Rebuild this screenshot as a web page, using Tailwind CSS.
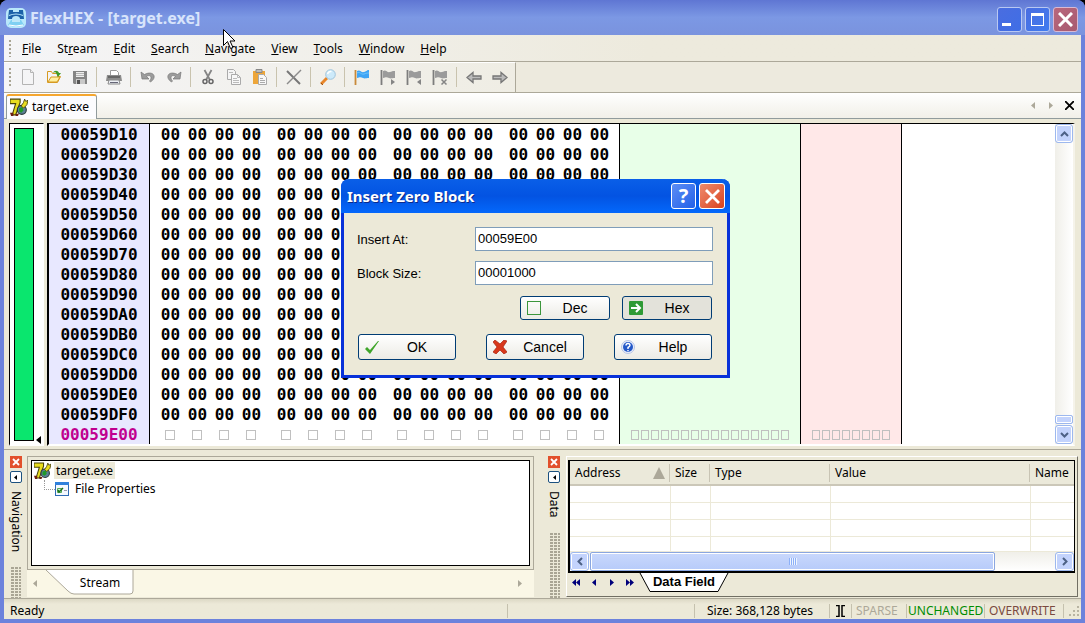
<!DOCTYPE html>
<html lang="en">
<head>
<meta charset="utf-8">
<title>FlexHEX - [target.exe]</title>
<script src="https://cdn.jsdelivr.net/npm/@tailwindcss/browser@4"></script>
</head>
<body class="bg-black">
<svg class="hidden">
  <defs>
    <linearGradient id="page" x1="0" y1="0" x2="1" y2="1"><stop offset="0" stop-color="#fff"/><stop offset="1" stop-color="#d4d4d4"/></linearGradient>
    <linearGradient id="fold" x1="0" y1="0" x2="0" y2="1"><stop offset="0" stop-color="#ffe98a"/><stop offset="1" stop-color="#f6b93a"/></linearGradient>
    <symbol id="exe" viewBox="0 0 16 16">
      <path d="M0 1h9v3L5 15H2L5 5H0z" fill="#e8dc1e" stroke="#4a4508" stroke-width="1"/>
      <circle cx="10.500" cy="10.500" r="4" fill="#5b7f96" stroke="#2a3a3a"/>
      <path d="M8 9l3-1 1 3-2 2-2-1z" fill="#1f9a2a"/>
      <path d="M10 7l2-3 1-3 1 2 2-1-1 4-3 3z" fill="#e8dc1e" stroke="#4a4508" stroke-width=".8"/>
      <path d="M0 13h3v3H1zM5 14h3l-1 2H5z" fill="#6b2010"/>
    </symbol>
    <symbol id="flag" viewBox="0 0 16 16">
      <path d="M1.500 1v15" stroke="#7d7d7d" stroke-width="1.800"/>
      <path d="M3 2c3-2 4 2 7 1s3-1 5-1v7c-3 0-4 1-6 0s-3-1-6 0z" fill="#9b9b9b"/>
    </symbol>
  </defs>
</svg>

<div class="flex min-h-screen flex-col rounded-t-lg bg-[#6c82dc] font-['Noto_Sans',sans-serif] text-[12px] leading-4 text-black">
  <header class="flex h-[35px] shrink-0 items-center rounded-t-lg bg-linear-to-b from-[#5f76d3] via-[#7c98e4] to-[#7a93de] pr-[7px] pl-1.5">
    <svg class="h-5 w-5" viewBox="0 0 20 20">
      <rect width="20" height="20" rx="5" fill="#b9e8fb"/>
      <path d="M3 2h4v2h6V2h4l1 9H2z" fill="#1c62a8"/>
      <path d="M3 7.500q7-3 14 0" fill="none" stroke="#b9e8fb" stroke-width="1.200"/>
      <path d="M6 11q0-3 4-3t4 3z" fill="#b9e8fb"/>
      <path d="M5 12h10l3 5q-8 3-16 0z" fill="#7fd0f2"/>
      <path d="M3 17q7 2 14 0M6 13h8" fill="none" stroke="#fff"/>
    </svg>
    <h1 class="ml-1 flex-1 text-[16px] leading-5 font-bold text-[#d8e4fb]">FlexHEX - [target.exe]</h1>
    <div class="flex gap-[3px] pt-1">
      <button aria-label="Minimize" class="flex h-[25px] w-[25px] items-end rounded-[3px] border border-[#b9c8f2] bg-linear-to-br from-[#4a6de0] to-[#3f6ee6] pb-[5px] pl-1"><span class="h-[3px] w-[9px] bg-white"></span></button>
      <button aria-label="Maximize" class="flex h-[25px] w-[25px] items-center justify-center rounded-[3px] border border-[#b9c8f2] bg-linear-to-br from-[#4a6de0] to-[#3f7cf0]"><span class="h-[13px] w-[13px] border border-t-[3px] border-white"></span></button>
      <button aria-label="Close" class="flex h-[25px] w-[25px] items-center justify-center rounded-[3px] border border-[#d9b9d2] bg-linear-to-br from-[#b8677c] to-[#a85a70]"><svg class="h-[15px] w-[15px]" viewBox="0 0 15 15"><path d="M1 1l13 13M14 1L1 14" stroke="#fff" stroke-width="3"/></svg></button>
    </div>
  </header>

  <div class="mx-1 mb-1 flex flex-1 flex-col bg-[#ece9d8]">
    <nav class="flex h-[27px] shrink-0 items-center border-b border-[#aca899] bg-linear-to-r from-[#f5f5f7] to-[#edeadd] to-60% pt-px pl-[5px]">
      <span class="mr-[11px] h-[17px] w-[2px] bg-[repeating-linear-gradient(#a9a594_0_2px,transparent_2px_4px)]"></span>
      <div class="flex gap-4">
        <a href="#"><u>F</u>ile</a><a href="#">St<u>r</u>eam</a><a href="#"><u>E</u>dit</a><a href="#"><u>S</u>earch</a><a href="#"><u>N</u>avigate</a><a href="#"><u>V</u>iew</a><a href="#"><u>T</u>ools</a><a href="#"><u>W</u>indow</a><a href="#"><u>H</u>elp</a>
      </div>
    </nav>

    <div class="flex h-[31px] shrink-0 border-b border-[#aca899] bg-[#edeade]">
      <div class="flex items-center border-t border-r border-t-white border-r-[#aca899] bg-linear-to-r from-[#f5f5f7] to-[#efede4] pr-0.5 pb-px pl-[5px]">
        <span class="mr-1 h-[19px] w-[2px] bg-[repeating-linear-gradient(#a9a594_0_2px,transparent_2px_4px)]"></span>
        <button aria-label="New" class="flex w-[26px] justify-center"><svg class="h-4 w-4" viewBox="0 0 16 16"><path d="M2.500.5h8l3 3v12h-11z" fill="url(#page)" stroke="#b4b4b4"/><path d="M10.500.5v3h3" fill="#eee" stroke="#b4b4b4"/></svg></button>
        <button aria-label="Open" class="flex w-[26px] justify-center"><svg class="h-4 w-4" viewBox="0 0 16 16"><path d="M1.500 13.500v-11h4l1 2h5v3h3l-3 6z" fill="url(#fold)" stroke="#d69a22"/><path d="M2 13l3-5h9l-3 5z" fill="#fff0a0" stroke="#d69a22"/><path d="M7 4c1-3 5-3 6 0h2l-3 4-2-4c0-1-2-1-3 0z" fill="#3f9a28"/></svg></button>
        <button aria-label="Save" class="flex w-[26px] justify-center"><svg class="h-4 w-4" viewBox="0 0 16 16"><path d="M1 2h14v13H2l-1-1z" fill="#858585"/><path d="M4 3h8v5H4z" fill="#eee"/><path d="M4 4.500h8M4 6.500h8" stroke="#b5b5b5"/><path d="M4 10h9v5H4z" fill="#c9c9c9"/><path d="M5 11h3v4H5z" fill="#555"/></svg></button>
        <span class="mr-1 ml-[3px] h-5 w-px bg-[#c9c3ae]"></span>
        <button aria-label="Print" class="flex w-[26px] justify-center"><svg class="h-4 w-4" viewBox="0 0 16 16"><path d="M4.500 6V1.500h6l2 2V6" fill="#fff" stroke="#9a9a9a"/><path d="M1 6h14l1 6H0z" fill="#8b8b8b"/><path d="M2 7h12v2H2z" fill="#666"/><path d="M3 11h10l1 4H2z" fill="#eceff5" stroke="#8b8b8b"/><path d="M4 13.500h8" stroke="#667"/></svg></button>
        <span class="mr-1 ml-[3px] h-5 w-px bg-[#c9c3ae]"></span>
        <button aria-label="Undo" class="flex w-[26px] justify-center"><svg class="h-4 w-4" viewBox="0 0 16 16"><path d="M1 3l1 7h7L6.500 7.500C10 5 13 8 9.500 12l1 1C18 8 13 1 4.500 5.500z" fill="#9c9c9c" stroke="#777" stroke-width=".7"/></svg></button>
        <button aria-label="Redo" class="flex w-[26px] justify-center"><svg class="h-4 w-4" viewBox="0 0 16 16"><path d="M15 3l-1 7H7l2.500-2.500C6 5 3 8 6.500 12l-1 1C-2 8 3 1 11.500 5.500z" fill="#9c9c9c" stroke="#777" stroke-width=".7"/></svg></button>
        <span class="mr-1 ml-[3px] h-5 w-px bg-[#c9c3ae]"></span>
        <button aria-label="Cut" class="flex w-[26px] justify-center"><svg class="h-4 w-4" viewBox="0 0 16 16" fill="none"><path d="M4.500 1L10 11M11.500 1L6 11" stroke="#858585" stroke-width="1.800"/><circle cx="5" cy="12.500" r="2" stroke="#666" stroke-width="1.500"/><circle cx="11" cy="12.500" r="2" stroke="#666" stroke-width="1.500"/></svg></button>
        <button aria-label="Copy" class="flex w-[26px] justify-center"><svg class="h-4 w-4" viewBox="0 0 16 16"><path d="M1.500.5h6l2 2v8h-8z" fill="#f5f5f5" stroke="#aaa"/><path d="M5.500 5.500h6l3 3v7h-9z" fill="#f8f8f8" stroke="#aaa"/><path d="M11.500 5.500v3h3M7 9.500h4M7 11.500h6M7 13.500h6M3 3.500h4" stroke="#bbb" fill="none"/></svg></button>
        <button aria-label="Paste" class="flex w-[26px] justify-center"><svg class="h-4 w-4" viewBox="0 0 16 16"><path d="M1 2h12v13H1z" fill="#eda63a"/><path d="M4 .5h6v3H4z" fill="#bcbcbc" stroke="#888"/><path d="M6.500 5.500h5l3 3v7h-8z" fill="#f8f8f8" stroke="#aaa"/><path d="M8 9.500h3M8 11.500h5M8 13.500h5" stroke="#aaa"/></svg></button>
        <span class="mr-1 ml-[3px] h-5 w-px bg-[#c9c3ae]"></span>
        <button aria-label="Delete" class="flex w-[26px] justify-center"><svg class="h-4 w-4" viewBox="0 0 16 16"><path d="M1 2l13 13" stroke="#777" stroke-width="2"/><path d="M15 1L1 15" stroke="#8b8b8b" stroke-width="1.500"/></svg></button>
        <span class="mr-1 ml-[3px] h-5 w-px bg-[#c9c3ae]"></span>
        <button aria-label="Find" class="flex w-[26px] justify-center"><svg class="h-4 w-4" viewBox="0 0 16 16"><path d="M7 9l-6 6" stroke="#e8862a" stroke-width="3"/><path d="M1 14l2 2" stroke="#9a5210"/><circle cx="10.500" cy="5.500" r="4.800" fill="#cdeafa" stroke="#9fc4dc"/><path d="M7.500 5q1-3 4-2.500" stroke="#fff" stroke-width="1.500" fill="none"/></svg></button>
        <span class="mr-1 ml-[3px] h-5 w-px bg-[#c9c3ae]"></span>
        <button aria-label="Toggle bookmark" class="flex w-[26px] justify-center"><svg class="h-4 w-4" viewBox="0 0 16 16"><path d="M1.500 1v15" stroke="#c98a3a" stroke-width="1.800"/><path d="M3 2c3-2 4 2 7 1s3-2 5-2v8c-3 0-4 1-6 0s-3-1-6 0z" fill="#3fa4f5"/><path d="M3 4c3-2 4 2 7 1s3-1 5-1" stroke="#6cc4fb" fill="none"/></svg></button>
        <button aria-label="Next bookmark" class="flex w-[26px] justify-center"><svg class="h-4 w-4" viewBox="0 0 16 16"><use href="#flag"/><path d="M11 10v6l4-3z" fill="#858585"/></svg></button>
        <button aria-label="Previous bookmark" class="flex w-[26px] justify-center"><svg class="h-4 w-4" viewBox="0 0 16 16"><use href="#flag"/><path d="M15 10v6l-4-3z" fill="#858585"/></svg></button>
        <button aria-label="Clear bookmarks" class="flex w-[26px] justify-center"><svg class="h-4 w-4" viewBox="0 0 16 16"><use href="#flag"/><path d="M9.500 10.500l5 5M14.500 10.500l-5 5" stroke="#858585" stroke-width="1.500"/></svg></button>
        <span class="mr-1 ml-[3px] h-5 w-px bg-[#c9c3ae]"></span>
        <button aria-label="Back" class="flex w-[26px] justify-center"><svg class="h-4 w-4" viewBox="0 0 16 16"><path d="M1 8.500l6-5v3.500h8v3H7v3.500z" fill="#bbb" stroke="#777" stroke-width="1.300"/></svg></button>
        <button aria-label="Forward" class="flex w-[26px] justify-center"><svg class="h-4 w-4" viewBox="0 0 16 16"><path d="M15 8.500l-6-5v3.500H1v3h8v3.500z" fill="#bbb" stroke="#777" stroke-width="1.300"/></svg></button>
      </div>
    </div>

    <div class="flex h-[26px] shrink-0 items-end bg-linear-to-b from-white to-[#f1efe7]">
      <span class="h-full w-0.5 border-b border-[#919b9c]"></span>
      <button class="flex h-[25px] items-center gap-1 rounded-t-[3px] border-x border-t-2 border-x-[#919b9c] border-t-[#f5a62f] bg-[#fcfcfe] pr-[7px] pb-0.5 pl-[3px]"><svg class="h-[18px] w-[18px]"><use href="#exe"/></svg>target.exe</button>
      <div class="flex h-full flex-1 items-center justify-end gap-3 border-b border-[#919b9c] pr-[7px]">
        <button aria-label="Scroll tabs left"><svg class="h-[7px] w-1" viewBox="0 0 4 7"><path d="M4 0v7L0 3.500z" fill="#aca899"/></svg></button>
        <button aria-label="Scroll tabs right" class="ml-0.5"><svg class="h-[7px] w-1" viewBox="0 0 4 7"><path d="M0 0v7l4-3.500z" fill="#aca899"/></svg></button>
        <button aria-label="Close document"><svg class="h-[9px] w-[9px]" viewBox="0 0 9 9"><path d="M0 0l9 9M9 0L0 9" stroke="#000" stroke-width="1.800"/></svg></button>
      </div>
    </div>

    <main class="flex flex-1 border-b border-[#aca899] pt-1 pr-1.5 pb-[3px] pl-[5px]">
      <div class="flex w-[35px] border border-b-2 border-t-black border-r-white border-b-white border-l-black bg-white">
        <div class="mt-1 mb-[3px] ml-1 w-5 border border-black bg-[#0ae66e]"></div>
        <svg class="mt-auto ml-0.5 h-2 w-[5px] shrink-0" viewBox="0 0 5 8"><path d="M5 0v8L0 4z"/></svg>
      </div>
      <div class="ml-[3px] flex flex-1 border-x-2 border-t border-b-2 border-t-black border-r-[#f5f3ea] border-b-white border-l-black bg-white">
        <table class="w-full table-fixed border-separate border-spacing-0 font-['DejaVu_Sans_Mono',monospace] text-[16px] leading-[18px] font-bold">
          <colgroup id="cols"></colgroup>
          <tbody id="dump"></tbody>
        </table>
        <div class="flex w-[18px] shrink-0 flex-col gap-px bg-linear-to-r from-[#f0efe9] to-white">
          <button aria-label="Scroll up" class="flex h-[19px] items-center justify-center rounded-[3px] border border-[#9db8ee] bg-[#c3d3fc] inset-ring inset-ring-white"><svg class="h-[6px] w-[9px]" viewBox="0 0 9 6"><path d="M1 5l3.500-3.500L8 5" stroke="#4d6185" stroke-width="2" fill="none"/></svg></button>
          <span class="mt-auto h-[9px] rounded-[2px] border border-[#9db8ee] bg-[#c3d3fc] inset-ring inset-ring-white"></span>
          <button aria-label="Scroll down" class="flex h-[19px] items-center justify-center rounded-[3px] border border-[#9db8ee] bg-[#c3d3fc] inset-ring inset-ring-white"><svg class="h-[6px] w-[9px]" viewBox="0 0 9 6"><path d="M1 1l3.500 3.500L8 1" stroke="#4d6185" stroke-width="2" fill="none"/></svg></button>
        </div>
      </div>
    </main>

    <div class="flex h-[148px] shrink-0 pt-1.5">
      <aside class="flex w-[23px] shrink-0 flex-col items-center gap-[3px]">
        <button aria-label="Close Navigation" class="flex h-3 w-3 shrink-0 items-center justify-center bg-[#e2502c]"><svg class="h-2 w-2" viewBox="0 0 8 8"><path d="M1 1l6 6M7 1L1 7" stroke="#fff" stroke-width="1.800"/></svg></button>
        <button aria-label="Collapse Navigation" class="flex h-3 w-3 shrink-0 items-center justify-center rounded-[2px] border border-[#1c5180] bg-white"><svg class="h-[5px] w-[3px]" viewBox="0 0 3 5"><path d="M3 0v5L0 2.500z"/></svg></button>
        <span class="mt-[5px] h-[72px] [writing-mode:vertical-rl]">Navigation</span>
        <span class="w-[11px] flex-1 bg-[linear-gradient(90deg,#ece9d8_1px,transparent_1px),linear-gradient(#ece9d8_1px,#a9a594_1px)] bg-size-[4px_3px]"></span>
      </aside>
      <section class="flex flex-1 flex-col">
        <div class="h-[114px] border border-[#aca899] p-[3px]">
          <div class="h-full border border-black bg-white pl-0.5">
            <div class="flex h-[19px] items-center gap-[3px]"><svg class="h-[17px] w-[17px]"><use href="#exe"/></svg><span class="bg-[#ece9d8] px-0.5 leading-[17px]">target.exe</span></div>
            <div class="flex h-[18px] items-center">
              <span class="ml-[10px] h-[10px] w-[11px] self-start border-b border-l border-dotted border-[#999]"></span>
              <svg class="mr-1.5 h-[14px] w-[14px]" viewBox="0 0 14 14"><rect x=".5" y=".5" width="13" height="13" fill="#f4f8ff" stroke="#2f6bb5"/><path d="M0 0h14v3H0z" fill="#2f80dc"/><path d="M2.500 6.500h4v4h-4z" fill="#dff0df" stroke="#5a5"/><path d="M3 8l1 2 4-4" stroke="#196f19" stroke-width="1.500" fill="none"/><path d="M9 8.500h3" stroke="#99a"/></svg>
              <span>File Properties</span>
            </div>
          </div>
        </div>
        <div class="flex h-[27px] items-center bg-[#faf7e6] pr-3 pl-1.5">
          <button aria-label="Previous stream"><svg class="h-[7px] w-1" viewBox="0 0 4 7"><path d="M4 0v7L0 3.500z" fill="#aca899"/></svg></button>
          <button class="relative ml-2 h-full w-[90px] self-start pb-0.5">
            <svg class="absolute top-0 left-0 h-[25px] w-[90px]" viewBox="0 0 90 25"><path d="M1 0l22 21q3 3 6 3h56q3 0 3-3V0" fill="#fff" stroke="#aca899"/></svg>
            <span class="relative pl-5">Stream</span>
          </button>
          <button aria-label="Next stream" class="ml-auto"><svg class="h-[7px] w-1" viewBox="0 0 4 7"><path d="M0 0v7l4-3.500z" fill="#aca899"/></svg></button>
        </div>
      </section>
      <aside class="ml-2 flex w-6 shrink-0 flex-col items-center gap-[3px]">
        <button aria-label="Close Data" class="flex h-3 w-3 shrink-0 items-center justify-center bg-[#e2502c]"><svg class="h-2 w-2" viewBox="0 0 8 8"><path d="M1 1l6 6M7 1L1 7" stroke="#fff" stroke-width="1.800"/></svg></button>
        <button aria-label="Collapse Data" class="flex h-3 w-3 shrink-0 items-center justify-center rounded-[2px] border border-[#1c5180] bg-white"><svg class="h-[5px] w-[3px]" viewBox="0 0 3 5"><path d="M3 0v5L0 2.500z"/></svg></button>
        <span class="mt-[5px] h-[38px] [writing-mode:vertical-rl]">Data</span>
        <span class="w-[11px] flex-1 bg-[linear-gradient(90deg,#ece9d8_1px,transparent_1px),linear-gradient(#ece9d8_1px,#a9a594_1px)] bg-size-[4px_3px]"></span>
      </aside>
      <section class="mr-[3px] mb-px flex w-[512px] shrink-0 flex-col border border-t-white border-r-[#716f64] border-b-[#716f64] border-l-white pt-[3px] pr-0.5 pl-px">
        <div class="border-2 border-t border-r border-black bg-white">
          <table class="w-full table-fixed border-collapse">
            <colgroup><col class="w-[100px]"><col class="w-10"><col class="w-[120px]"><col class="w-[200px]"><col></colgroup>
            <thead class="bg-[#ebe9da] text-left">
              <tr class="h-6 border-b-2 border-[#cbc7b8]">
                <th class="pt-px pl-[5px] font-normal"><div class="flex items-center justify-between border-r border-[#c8c4b4] pr-1 leading-[18px]">Address<svg class="h-3 w-3" viewBox="0 0 12 12"><path d="M6 0l6 12H0z" fill="#aca899"/></svg></div></th>
                <th class="pt-px pl-[5px] font-normal"><div class="border-r border-[#c8c4b4] leading-[18px]">Size</div></th>
                <th class="pt-px pl-[5px] font-normal"><div class="border-r border-[#c8c4b4] leading-[18px]">Type</div></th>
                <th class="pt-px pl-[5px] font-normal"><div class="border-r border-[#c8c4b4] leading-[18px]">Value</div></th>
                <th class="pt-px pl-[5px] font-normal">Name</th>
              </tr>
            </thead>
            <tbody>
              <tr class="h-[17px] border-b border-[#ece9d8]"><td class="border-r border-[#ece9d8]"></td><td class="border-r border-[#ece9d8]"></td><td class="border-r border-[#ece9d8]"></td><td class="border-r border-[#ece9d8]"></td><td></td></tr>
              <tr class="h-[17px] border-b border-[#ece9d8]"><td class="border-r border-[#ece9d8]"></td><td class="border-r border-[#ece9d8]"></td><td class="border-r border-[#ece9d8]"></td><td class="border-r border-[#ece9d8]"></td><td></td></tr>
              <tr class="h-[17px] border-b border-[#ece9d8]"><td class="border-r border-[#ece9d8]"></td><td class="border-r border-[#ece9d8]"></td><td class="border-r border-[#ece9d8]"></td><td class="border-r border-[#ece9d8]"></td><td></td></tr>
              <tr class="h-[15px] border-b border-[#ece9d8]"><td class="border-r border-[#ece9d8]"></td><td class="border-r border-[#ece9d8]"></td><td class="border-r border-[#ece9d8]"></td><td class="border-r border-[#ece9d8]"></td><td></td></tr>
            </tbody>
          </table>
          <div class="flex h-[19px] gap-px bg-linear-to-b from-[#f0efe9] to-white">
            <button aria-label="Scroll left" class="flex w-[19px] items-center justify-center rounded-[3px] border border-[#9db8ee] bg-[#c3d3fc] inset-ring inset-ring-white"><svg class="h-[9px] w-[6px]" viewBox="0 0 6 9"><path d="M5 1L1.500 4.500 5 8" stroke="#4d6185" stroke-width="2" fill="none"/></svg></button>
            <span class="flex w-[405px] items-center justify-center rounded-[2px] border border-[#8aa6e0] bg-linear-to-b from-[#c9d8fc] to-[#b7cbfa] inset-ring inset-ring-white"><span class="h-[7px] w-2 bg-[repeating-linear-gradient(90deg,#8cb0f8_0_1px,#eef4fe_1px_2px)]"></span></span>
            <button aria-label="Scroll right" class="ml-auto flex w-[19px] items-center justify-center rounded-[3px] border border-[#9db8ee] bg-[#c3d3fc] inset-ring inset-ring-white"><svg class="h-[9px] w-[6px]" viewBox="0 0 6 9"><path d="M1 1l3.500 3.500L1 8" stroke="#4d6185" stroke-width="2" fill="none"/></svg></button>
          </div>
        </div>
        <div class="flex h-5 gap-[14px] pl-1 text-[#00007b]">
          <button aria-label="First sheet"><svg class="h-[7px] w-2" viewBox="0 0 8 7"><path d="M4 0v7L0 3.500zM8 0v7L4 3.500z" fill="currentColor"/></svg></button>
          <button aria-label="Previous sheet" class="-ml-0.5"><svg class="h-[7px] w-1" viewBox="0 0 4 7"><path d="M4 0v7L0 3.500z" fill="currentColor"/></svg></button>
          <button aria-label="Next sheet"><svg class="h-[7px] w-1" viewBox="0 0 4 7"><path d="M0 0v7l4-3.500z" fill="currentColor"/></svg></button>
          <button aria-label="Last sheet" class="-ml-0.5"><svg class="h-[7px] w-2" viewBox="0 0 8 7"><path d="M0 0v7l4-3.500zM4 0v7l4-3.500z" fill="currentColor"/></svg></button>
          <button class="relative -ml-[9px] h-full w-[90px] pb-0.5 font-['Liberation_Sans',sans-serif] text-[13px] font-bold text-black">
            <svg class="absolute top-0 left-0 h-5 w-[90px]" viewBox="0 0 90 20"><path d="M1 0l10 18.500h68L89 0" fill="#fff" stroke="#000"/></svg>
            <span class="relative">Data Field</span>
          </button>
        </div>
      </section>
    </div>

    <footer class="flex h-[21px] shrink-0 items-center border-t border-[#aca899] bg-linear-to-b from-[#dcd8c5] to-[#ece9d8] to-25% pt-1 pl-1.5 whitespace-nowrap">
      <span class="w-[497px]">Ready</span>
      <span class="h-[14px] w-[187px] border-l border-[#c5c1ae]"></span>
      <span class="flex-1 border-l border-[#c5c1ae] pl-3 leading-[14px]">Size: 368,128 bytes</span>
      <span class="flex h-[14px] w-[22px] items-center justify-center border-l border-[#c5c1ae]"><svg class="h-3 w-[9px]" viewBox="0 0 9 12"><path d="M0 .5h3v11H0M9 .5H6v11h3" fill="none" stroke="#000" stroke-width="1.500"/></svg></span>
      <span class="w-[55px] border-l border-[#c5c1ae] pl-1 leading-[14px] text-[#aca899]">SPARSE</span>
      <span class="w-[78px] border-l border-[#c5c1ae] pl-px leading-[14px] text-[#008c00]">UNCHANGED</span>
      <span class="w-[79px] border-l border-[#c5c1ae] pl-1 leading-[14px] text-[#7b4a40]">OVERWRITE</span>
      <span class="flex h-[14px] w-[18px] items-end justify-end border-l border-[#c5c1ae]"><svg class="h-3 w-3" viewBox="0 0 12 12" fill="#b8b4a2"><path d="M8 0h2v2H8zM8 4h2v2H8zM8 8h2v2H8zM4 4h2v2H4zM4 8h2v2H4zM0 8h2v2H0z"/></svg></span>
    </footer>
  </div>
</div>

<div role="dialog" aria-labelledby="dlg" class="absolute top-[179px] left-[341px] w-[389px] rounded-t-lg border-x-[3px] border-b-[3px] border-[#0831d9] bg-[#ece9d8] font-['Liberation_Sans',sans-serif] text-[13px] leading-4">
  <div class="-mx-[3px] flex h-[34px] items-center rounded-t-lg bg-linear-to-b from-[#0a5fe8] via-[#0353e2] to-[#0468fb] pr-[5px] pl-1.5">
    <h2 id="dlg" class="flex-1 font-['Noto_Sans',sans-serif] text-[15px] font-bold text-white [text-shadow:1px_1px_#0b2a8c]">Insert Zero Block</h2>
    <div class="flex gap-[3px]">
      <button aria-label="What's this" class="flex h-[26px] w-[25px] items-center justify-center rounded-[3px] border border-white bg-linear-to-br from-[#5c8df5] to-[#2160e8] font-['Noto_Sans',sans-serif] text-[20px] font-bold text-white">?</button>
      <button aria-label="Close dialog" class="flex h-[26px] w-[26px] items-center justify-center rounded-[3px] border border-white bg-linear-to-br from-[#ef8a6c] to-[#d8401a]"><svg class="h-[15px] w-[15px]" viewBox="0 0 15 15"><path d="M1 1l13 13M14 1L1 14" stroke="#fff" stroke-width="2.800"/></svg></button>
    </div>
  </div>
  <form class="px-[13px] pt-[14px] pb-[15px]">
    <div class="grid grid-cols-[118px_1fr] items-center gap-y-[10px] pr-px">
      <label for="at" class="pt-px">Insert At:</label><input id="at" value="00059E00" class="h-6 w-full min-w-0 border border-[#7f9db9] bg-white px-0.5 pb-px">
      <label for="size" class="pt-px">Block Size:</label><input id="size" value="00001000" class="h-6 w-full min-w-0 border border-[#7f9db9] bg-white px-0.5 pb-px">
    </div>
    <div class="mt-[11px] flex justify-end gap-3 pr-0.5 text-[14px]">
      <button type="button" class="flex h-6 w-[90px] items-center rounded-[3px] border border-[#003c74] bg-linear-to-b from-white to-[#ecebe5] pl-1.5"><span class="h-[14px] w-[14px] border border-[#3c963c]"></span><span class="flex-1 text-center">Dec</span></button>
      <button type="button" class="flex h-6 w-[90px] items-center rounded-[3px] border border-[#003c74] bg-[#e3e2da] pl-1.5"><svg class="h-[14px] w-[14px]" viewBox="0 0 14 14"><rect width="14" height="14" rx="1" fill="#2f9a35"/><path d="M2 7h9M7 3l4 4-4 4" stroke="#fff" stroke-width="2" fill="none"/></svg><span class="flex-1 text-center">Hex</span></button>
    </div>
    <div class="mt-[14px] flex justify-between pr-0.5 pl-px text-[14px]">
      <button class="flex h-[26px] w-[98px] items-center rounded-[3px] border border-[#003c74] bg-linear-to-b from-white to-[#ecebe5] pl-1.5"><svg class="h-[14px] w-[14px]" viewBox="0 0 14 14"><path d="M0 9l2-2 3 3L13 1l1 0L5 14z" fill="#3fa52a"/></svg><span class="flex-1 text-center">OK</span></button>
      <button type="button" class="flex h-[26px] w-[98px] items-center rounded-[3px] border border-[#003c74] bg-linear-to-b from-white to-[#ecebe5] pl-1.5"><svg class="h-[14px] w-[14px]" viewBox="0 0 14 14"><path d="M0 2l2-2 5 4 4-4 3 1-4 6 4 5-3 2-4-4-4 4-3-2 4-5z" fill="#d8381c" stroke="#a82410" stroke-width=".7"/></svg><span class="flex-1 text-center">Cancel</span></button>
      <button type="button" class="flex h-[26px] w-[98px] items-center rounded-[3px] border border-[#003c74] bg-linear-to-b from-white to-[#ecebe5] pl-1.5"><svg class="h-[14px] w-[14px]" viewBox="0 0 14 14"><circle cx="7" cy="7" r="6.500" fill="#e8eefb" stroke="#b8c4e4"/><circle cx="7" cy="7" r="5" fill="#2458c8"/><path d="M5 5.500q0-2 2-2t2 1.800Q9 6.500 7 7.500V9M7 10v1.200" stroke="#fff" stroke-width="1.400" fill="none"/></svg><span class="flex-1 text-center">Help</span></button>
    </div>
  </form>
</div>

<svg class="absolute top-[29px] left-[223px] h-[21px] w-3" viewBox="0 0 12 21"><path d="M.5.500v16l4-4 3 7 2.500-1-3-6.500h5z" fill="#fff" stroke="#000"/></svg>

<script>
  // Builds the hex dump: fifteen rows of zero bytes, then the end-of-file row.
  const cols = [101];
  for (let i = 0; i < 16; i++) cols.push(27 + (i === 0 ? 7 : i % 4 === 0 ? 8 : 0) + (i === 15 ? 6 : 0));
  cols.push(181, 101, 0);
  document.getElementById('cols').innerHTML = cols.map(w => w ? `<col style="width:${w}px">` : '<col>').join('');
  const boxes = n => '<span class="flex pl-[11px]">' + '<i class="mr-0.5 h-[10px] w-2 shrink-0 border border-[#c0c0c0]"></i>'.repeat(n) + '</span>';
  const rows = 'D10 D20 D30 D40 D50 D60 D70 D80 D90 DA0 DB0 DC0 DD0 DE0 DF0 E00'.split(' ');
  document.getElementById('dump').innerHTML = rows.map((r, k) => {
    const end = k === 15;
    let h = `<tr class="h-5"><th class="border-r border-black bg-[#e8e8ff] p-0 pt-0.5 text-center ${end ? 'text-[#c0008f]' : ''}">00059${r}</th>`;
    for (let i = 0; i < 16; i++) {
      const pad = i === 0 ? 'pl-[7px]' : i === 15 ? 'pr-1.5' : i % 4 === 0 ? 'pl-2' : '';
      h += `<td class="p-0 pt-0.5 text-center whitespace-nowrap ${pad}">${end ? '<i class="ml-2 block h-[10px] w-[10px] border border-[#c0c0c0]"></i>' : '00'}</td>`;
    }
    return h + `<td class="border-l border-black bg-[#e8ffe8] p-0 pt-0.5">${end ? boxes(16) : ''}</td><td class="border-l border-black bg-[#ffe8e8] p-0 pt-0.5">${end ? boxes(8) : ''}</td><td class="border-l border-black p-0"></td></tr>`;
  }).join('');
</script>
</body>
</html>
